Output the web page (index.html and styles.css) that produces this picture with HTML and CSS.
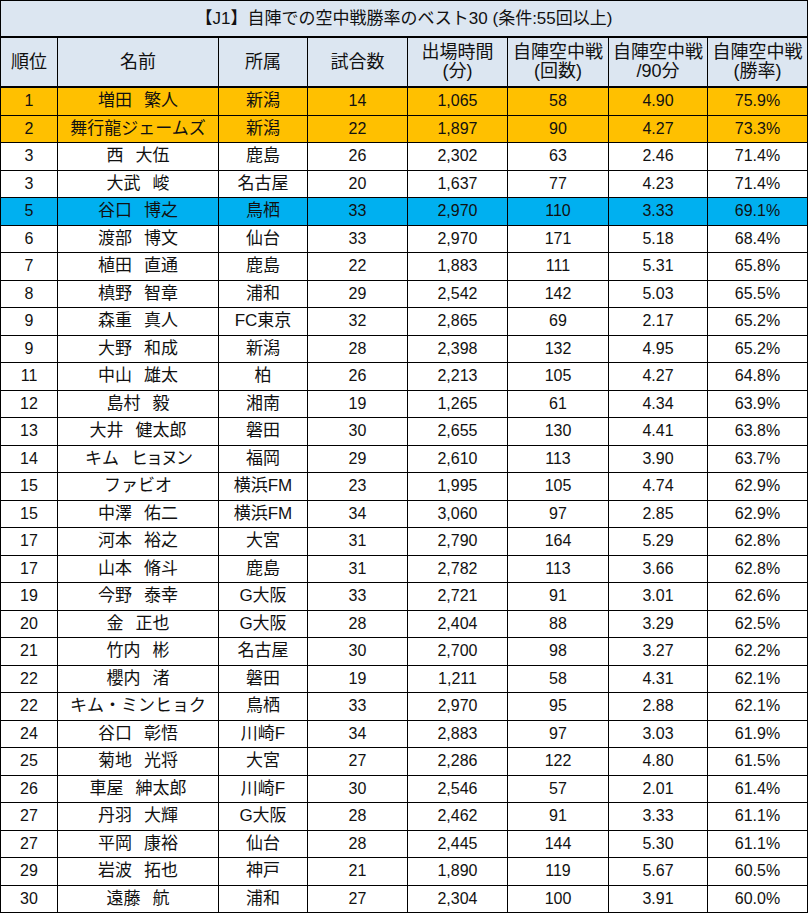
FILE: index.html
```html
<!DOCTYPE html>
<html lang="ja">
<head>
<meta charset="utf-8">
<link rel="stylesheet" href="styles.css">
</head>
<body>
<table class="rank">
<colgroup>
<col class="c-rank"><col class="c-name"><col class="c-team"><col class="c-num"><col class="c-num"><col class="c-num2"><col class="c-num3"><col class="c-num">
</colgroup>
<thead>
<tr class="title"><th colspan="8">【J1】自陣での空中戦勝率のベスト30 (条件:55回以上)</th></tr>
<tr class="head"><th>順位</th><th>名前</th><th>所属</th><th>試合数</th><th>出場時間<br>(分)</th><th>自陣空中戦<br>(回数)</th><th>自陣空中戦<br>/90分</th><th>自陣空中戦<br>(勝率)</th></tr>
</thead>
<tbody>
<tr class="gold"><td>1</td><td class="jp">増田<span class="sp">　</span>繁人</td><td class="jp">新潟</td><td>14</td><td>1,065</td><td>58</td><td>4.90</td><td>75.9%</td></tr>
<tr class="gold"><td>2</td><td class="jp">舞行龍ジェームズ</td><td class="jp">新潟</td><td>22</td><td>1,897</td><td>90</td><td>4.27</td><td>73.3%</td></tr>
<tr><td>3</td><td class="jp">西<span class="sp">　</span>大伍</td><td class="jp">鹿島</td><td>26</td><td>2,302</td><td>63</td><td>2.46</td><td>71.4%</td></tr>
<tr><td>3</td><td class="jp">大武<span class="sp">　</span>峻</td><td class="jp">名古屋</td><td>20</td><td>1,637</td><td>77</td><td>4.23</td><td>71.4%</td></tr>
<tr class="sky"><td>5</td><td class="jp">谷口<span class="sp">　</span>博之</td><td class="jp">鳥栖</td><td>33</td><td>2,970</td><td>110</td><td>3.33</td><td>69.1%</td></tr>
<tr><td>6</td><td class="jp">渡部<span class="sp">　</span>博文</td><td class="jp">仙台</td><td>33</td><td>2,970</td><td>171</td><td>5.18</td><td>68.4%</td></tr>
<tr><td>7</td><td class="jp">植田<span class="sp">　</span>直通</td><td class="jp">鹿島</td><td>22</td><td>1,883</td><td>111</td><td>5.31</td><td>65.8%</td></tr>
<tr><td>8</td><td class="jp">槙野<span class="sp">　</span>智章</td><td class="jp">浦和</td><td>29</td><td>2,542</td><td>142</td><td>5.03</td><td>65.5%</td></tr>
<tr><td>9</td><td class="jp">森重<span class="sp">　</span>真人</td><td class="jp">FC東京</td><td>32</td><td>2,865</td><td>69</td><td>2.17</td><td>65.2%</td></tr>
<tr><td>9</td><td class="jp">大野<span class="sp">　</span>和成</td><td class="jp">新潟</td><td>28</td><td>2,398</td><td>132</td><td>4.95</td><td>65.2%</td></tr>
<tr><td>11</td><td class="jp">中山<span class="sp">　</span>雄太</td><td class="jp">柏</td><td>26</td><td>2,213</td><td>105</td><td>4.27</td><td>64.8%</td></tr>
<tr><td>12</td><td class="jp">島村<span class="sp">　</span>毅</td><td class="jp">湘南</td><td>19</td><td>1,265</td><td>61</td><td>4.34</td><td>63.9%</td></tr>
<tr><td>13</td><td class="jp">大井<span class="sp">　</span>健太郎</td><td class="jp">磐田</td><td>30</td><td>2,655</td><td>130</td><td>4.41</td><td>63.8%</td></tr>
<tr><td>14</td><td class="jp">キム<span class="sp">　</span><span class="kana">ヒョヌン</span></td><td class="jp">福岡</td><td>29</td><td>2,610</td><td>113</td><td>3.90</td><td>63.7%</td></tr>
<tr><td>15</td><td class="jp">ファビオ</td><td class="jp">横浜FM</td><td>23</td><td>1,995</td><td>105</td><td>4.74</td><td>62.9%</td></tr>
<tr><td>15</td><td class="jp">中澤<span class="sp">　</span>佑二</td><td class="jp">横浜FM</td><td>34</td><td>3,060</td><td>97</td><td>2.85</td><td>62.9%</td></tr>
<tr><td>17</td><td class="jp">河本<span class="sp">　</span>裕之</td><td class="jp">大宮</td><td>31</td><td>2,790</td><td>164</td><td>5.29</td><td>62.8%</td></tr>
<tr><td>17</td><td class="jp">山本<span class="sp">　</span>脩斗</td><td class="jp">鹿島</td><td>31</td><td>2,782</td><td>113</td><td>3.66</td><td>62.8%</td></tr>
<tr><td>19</td><td class="jp">今野<span class="sp">　</span>泰幸</td><td class="jp">G大阪</td><td>33</td><td>2,721</td><td>91</td><td>3.01</td><td>62.6%</td></tr>
<tr><td>20</td><td class="jp">金<span class="sp">　</span>正也</td><td class="jp">G大阪</td><td>28</td><td>2,404</td><td>88</td><td>3.29</td><td>62.5%</td></tr>
<tr><td>21</td><td class="jp">竹内<span class="sp">　</span>彬</td><td class="jp">名古屋</td><td>30</td><td>2,700</td><td>98</td><td>3.27</td><td>62.2%</td></tr>
<tr><td>22</td><td class="jp">櫻内<span class="sp">　</span>渚</td><td class="jp">磐田</td><td>19</td><td>1,211</td><td>58</td><td>4.31</td><td>62.1%</td></tr>
<tr><td>22</td><td class="jp">キム・ミンヒョク</td><td class="jp">鳥栖</td><td>33</td><td>2,970</td><td>95</td><td>2.88</td><td>62.1%</td></tr>
<tr><td>24</td><td class="jp">谷口<span class="sp">　</span>彰悟</td><td class="jp">川崎F</td><td>34</td><td>2,883</td><td>97</td><td>3.03</td><td>61.9%</td></tr>
<tr><td>25</td><td class="jp">菊地<span class="sp">　</span>光将</td><td class="jp">大宮</td><td>27</td><td>2,286</td><td>122</td><td>4.80</td><td>61.5%</td></tr>
<tr><td>26</td><td class="jp">車屋<span class="sp">　</span>紳太郎</td><td class="jp">川崎F</td><td>30</td><td>2,546</td><td>57</td><td>2.01</td><td>61.4%</td></tr>
<tr><td>27</td><td class="jp">丹羽<span class="sp">　</span>大輝</td><td class="jp">G大阪</td><td>28</td><td>2,462</td><td>91</td><td>3.33</td><td>61.1%</td></tr>
<tr><td>27</td><td class="jp">平岡<span class="sp">　</span>康裕</td><td class="jp">仙台</td><td>28</td><td>2,445</td><td>144</td><td>5.30</td><td>61.1%</td></tr>
<tr><td>29</td><td class="jp">岩波<span class="sp">　</span>拓也</td><td class="jp">神戸</td><td>21</td><td>1,890</td><td>119</td><td>5.67</td><td>60.5%</td></tr>
<tr><td>30</td><td class="jp">遠藤<span class="sp">　</span>航</td><td class="jp">浦和</td><td>27</td><td>2,304</td><td>100</td><td>3.91</td><td>60.0%</td></tr>
</tbody>
</table>
</body>
</html>
```

FILE: styles.css
```css
html, body {
  margin: 0;
  padding: 0;
  background: #ffffff;
}

.rank {
  border-collapse: collapse;
  table-layout: fixed;
  width: 808px;
  font-family: "Liberation Sans Narrow", "Liberation Sans", "Noto Sans CJK JP", sans-serif;
  font-size: 16px;
  color: #111111;
}

.c-rank { width: 57px; }
.c-name { width: 161px; }
.c-team { width: 89px; }
.c-num { width: 100px; }
.c-num2 { width: 101px; }
.c-num3 { width: 99px; }

.rank th,
.rank td {
  border: 1px solid #000000;
  padding: 0;
  text-align: center;
  vertical-align: middle;
  font-weight: normal;
  white-space: nowrap;
  overflow: hidden;
}

.rank td {
  height: 26.5px;
  line-height: 20px;
}

.rank td.jp {
  font-size: 17px;
}

.sp {
  letter-spacing: -5px;
}

.kana {
  letter-spacing: -2px;
}

.title th {
  height: 35px;
  background: #dce6f1;
  font-size: 17px;
  line-height: 22px;
  border-bottom: 2px solid #000000;
}

.head th {
  height: 48px;
  background: #dce6f1;
  font-size: 18px;
  line-height: 19px;
  border-bottom: 2px solid #000000;
}

.gold td {
  background: #ffc000;
}

.sky td {
  background: #00b0f0;
}
```
